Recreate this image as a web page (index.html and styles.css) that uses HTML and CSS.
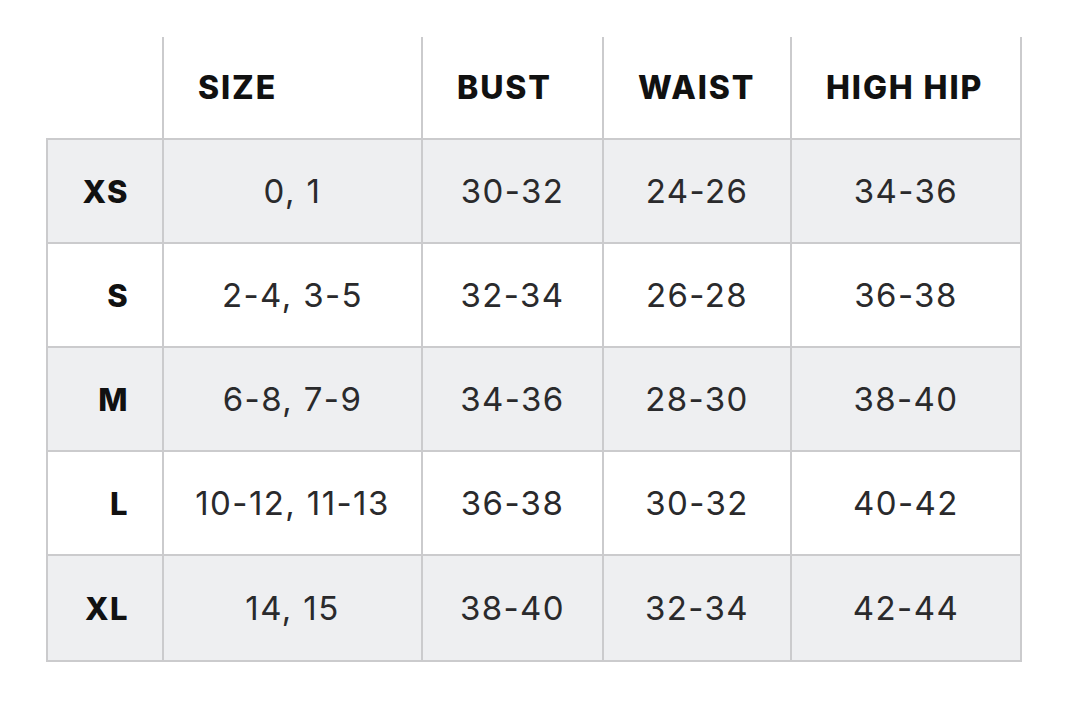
FILE: index.html
```html
<!DOCTYPE html>
<html>
<head>
<meta charset="utf-8">
<link rel="stylesheet" href="styles.css">
</head>
<body>
<div class="wrap">
<table class="chart">
  <colgroup>
    <col class="c0"><col class="c1"><col class="c2"><col class="c3"><col class="c4">
  </colgroup>
  <thead>
    <tr>
      <th class="blank"></th>
      <th>SIZE</th>
      <th>BUST</th>
      <th>WAIST</th>
      <th>HIGH HIP</th>
    </tr>
  </thead>
  <tbody>
    <tr class="shade"><th class="lab">XS</th><td>0, 1</td><td>30-32</td><td>24-26</td><td>34-36</td></tr>
    <tr><th class="lab">S</th><td>2-4, 3-5</td><td>32-34</td><td>26-28</td><td>36-38</td></tr>
    <tr class="shade"><th class="lab">M</th><td>6-8, 7-9</td><td>34-36</td><td>28-30</td><td>38-40</td></tr>
    <tr><th class="lab">L</th><td>10-12, 11-13</td><td>36-38</td><td>30-32</td><td>40-42</td></tr>
    <tr class="shade"><th class="lab">XL</th><td>14, 15</td><td>38-40</td><td>32-34</td><td>42-44</td></tr>
  </tbody>
</table>
</div>
</body>
</html>
```
FILE: styles.css
```css
html, body {
  margin: 0;
  padding: 0;
  background: #ffffff;
}
.wrap {
  padding: 37px 0 0 46px;
}
.chart {
  border-collapse: collapse;
  table-layout: fixed;
  width: 974px;
  font-family: "Inter", "Liberation Sans", sans-serif;
  color: #222222;
}
.c0 { width: 116px; }
.c1 { width: 259px; }
.c2 { width: 181px; }
.c3 { width: 188px; }
.c4 { width: 230px; }
.chart th, .chart td {
  border: 2px solid #cbcbcd;
  padding: 0;
}
.chart thead th {
  height: 100px;
  border-top: none;
  text-align: left;
  padding-left: 34px;
  font-weight: 800;
  font-size: 32px;
  letter-spacing: 1.9px;
  color: #111111;
  padding-bottom: 1px;
}
.chart thead th.blank {
  border-left: none;
  border-top: none;
}
.chart tbody td, .chart tbody th {
  height: 102px;
}
.chart tbody tr:last-child td, .chart tbody tr:last-child th {
  height: 104px;
}
.chart tbody td {
  text-align: center;
  font-size: 33px;
  font-weight: 400;
  letter-spacing: 1.4px;
  color: #2a2a2c;
}
.chart tbody th.lab {
  text-align: right;
  padding-right: 33px;
  font-size: 31px;
  font-weight: 800;
  letter-spacing: 1.4px;
  color: #111111;
}
.chart tr.shade td, .chart tr.shade th {
  background: #eeeff1;
}
```
